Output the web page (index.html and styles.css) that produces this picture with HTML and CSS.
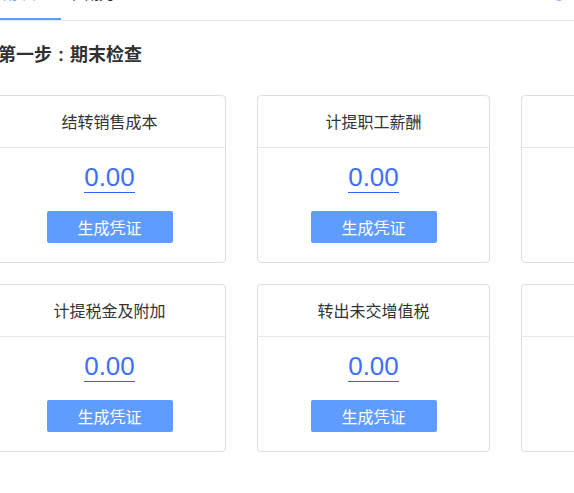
FILE: index.html
```html
<!DOCTYPE html>
<html lang="zh">
<head>
<meta charset="utf-8">
<title>期末检查</title>
<link rel="stylesheet" href="styles.css">
</head>
<body>
<div class="page">
  <div class="tabs">
    <div class="tab active">期末检查</div>
    <div class="tab">往期凭证</div>
    <div class="tab-tool">
      <svg width="14" height="14" viewBox="0 0 14 14"><circle cx="7" cy="7" r="6" fill="none" stroke="#5c9cff" stroke-width="1.6"/></svg>
    </div>
  </div>
  <h2 class="title">第一步<span class="colon">:</span>期末检查</h2>
  <div class="grid">
    <div class="card">
      <div class="card-head">结转销售成本</div>
      <div class="card-body"><span class="amount">0.00</span><button class="btn">生成凭证</button></div>
    </div>
    <div class="card">
      <div class="card-head">计提职工薪酬</div>
      <div class="card-body"><span class="amount">0.00</span><button class="btn">生成凭证</button></div>
    </div>
    <div class="card">
      <div class="card-head">计提折旧摊销</div>
      <div class="card-body"><span class="amount">0.00</span><button class="btn">生成凭证</button></div>
    </div>
    <div class="card">
      <div class="card-head">计提税金及附加</div>
      <div class="card-body"><span class="amount">0.00</span><button class="btn">生成凭证</button></div>
    </div>
    <div class="card">
      <div class="card-head">转出未交增值税</div>
      <div class="card-body"><span class="amount">0.00</span><button class="btn">生成凭证</button></div>
    </div>
    <div class="card">
      <div class="card-head">计提所得税</div>
      <div class="card-body"><span class="amount">0.00</span><button class="btn">生成凭证</button></div>
    </div>
  </div>
</div>
</body>
</html>
```

FILE: styles.css
```css
html, body {
  margin: 0;
  padding: 0;
  background: #fff;
  overflow: hidden;
}
body {
  font-family: "Noto Sans CJK SC", "Liberation Sans", sans-serif;
  color: #333;
  width: 574px;
  height: 493px;
}
.page {
  width: 574px;
}
.tabs {
  display: flex;
  align-items: flex-start;
  margin-top: -19px;
  height: 39px;
  border-bottom: 1px solid #e4e7ed;
}
.tab {
  height: 39px;
  line-height: 24px;
  font-size: 14px;
  color: #303133;
  padding: 0 0 0 1px;
  margin-right: 8px;
  width: 60px;
  box-sizing: border-box;
  white-space: nowrap;
}
.tab.active {
  color: #5c9cff;
  width: 61px;
  margin-right: 9px;
  box-shadow: inset 0 -2px 0 #5c9cff;
  padding-left: 3px;
}
.tab-tool {
  margin-left: auto;
  margin-right: 8px;
  padding-top: 6px;
  line-height: 0;
}
.title {
  margin: 20px 0 0 -2px;
  height: 24px;
  font-size: 18px;
  line-height: 24px;
  font-weight: bold;
  color: #303133;
}
.colon {
  display: inline-block;
  width: 18px;
  line-height: 18px;
  text-align: center;
  font-family: "Liberation Sans", sans-serif;
}
.grid {
  display: grid;
  grid-template-columns: repeat(3, 233px);
  column-gap: 31px;
  row-gap: 21px;
  margin: 30px 0 0 -7px;
}
.card {
  border: 1px solid #dcdfe6;
  border-radius: 4px;
  background: #fff;
  box-sizing: border-box;
  height: 168px;
}
.card-head {
  height: 51px;
  line-height: 51px;
  border-bottom: 1px solid #e4e7ed;
  text-align: center;
  font-size: 16px;
  color: #333;
}
.card-body {
  display: flex;
  flex-direction: column;
  align-items: center;
  padding-top: 14px;
}
.amount {
  font-family: "Liberation Sans", sans-serif;
  font-size: 26px;
  line-height: 30px;
  color: #3f6ff6;
  border-bottom: 1px solid #2f66f5;
}
.btn {
  margin-top: 18px;
  width: 126px;
  height: 32px;
  border: none;
  border-radius: 2px;
  background: #5f9cff;
  color: #fff;
  font-family: "Noto Sans CJK SC", sans-serif;
  font-size: 16px;
  padding: 0;
}
```
